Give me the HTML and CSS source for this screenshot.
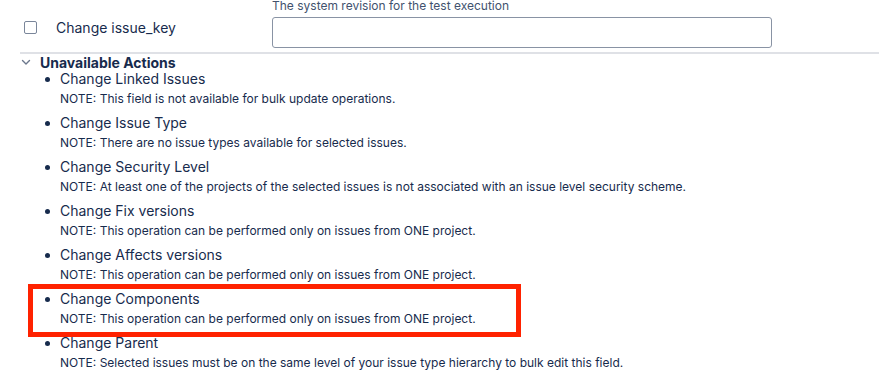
FILE: index.html
```html
<!DOCTYPE html>
<html lang="en">
<head>
    <meta charset="UTF-8">
    <title>Bulk Edit - Unavailable Actions</title>
    <link rel="stylesheet" href="styles.css">
</head>
<body>
    <div class="page">
        <div class="field-row">
            <label class="check">
                <span class="box"></span>
                <span class="field-name">Change issue_key</span>
            </label>
            <div class="field-input">
                <div class="help">The system revision for the test execution</div>
                <input type="text" class="text-input">
            </div>
        </div>

        <div class="section">
            <div class="section-title">
                <svg class="chevron" width="10" height="10" viewBox="0 0 10 10">
                    <path d="M1.5 3.5 L5 7 L8.5 3.5" fill="none" stroke="#6b778c" stroke-width="1.4" stroke-linecap="round" stroke-linejoin="round"/>
                </svg>
                Unavailable Actions
            </div>
            <ul class="actions">
                <li>
                    <div class="action">Change Linked Issues</div>
                    <div class="note">NOTE: This field is not available for bulk update operations.</div>
                </li>
                <li>
                    <div class="action">Change Issue Type</div>
                    <div class="note">NOTE: There are no issue types available for selected issues.</div>
                </li>
                <li>
                    <div class="action">Change Security Level</div>
                    <div class="note">NOTE: At least one of the projects of the selected issues is not associated with an issue level security scheme.</div>
                </li>
                <li>
                    <div class="action">Change Fix versions</div>
                    <div class="note">NOTE: This operation can be performed only on issues from ONE project.</div>
                </li>
                <li>
                    <div class="action">Change Affects versions</div>
                    <div class="note">NOTE: This operation can be performed only on issues from ONE project.</div>
                </li>
                <li class="highlight">
                    <div class="action">Change Components</div>
                    <div class="note">NOTE: This operation can be performed only on issues from ONE project.</div>
                </li>
                <li>
                    <div class="action">Change Parent</div>
                    <div class="note">NOTE: Selected issues must be on the same level of your issue type hierarchy to bulk edit this field.</div>
                </li>
            </ul>
        </div>
    </div>
</body>
</html>
```

FILE: styles.css
```css
*, *::before, *::after {
    margin: 0;
    padding: 0;
    box-sizing: border-box;
}

body {
    font-family: Inter, "Noto Sans", sans-serif;
    color: #172b4d;
    background: #fff;
    overflow: hidden;
}

.page {
    padding-left: 20px;
}

.field-row {
    display: flex;
    align-items: flex-start;
    border-bottom: 2px solid #dfe1e6;
    padding-bottom: 4px;
}

.check {
    display: flex;
    align-items: center;
    width: 252px;
    height: 30px;
    margin-top: 12px;
    padding-left: 4px;
}

.box {
    width: 13px;
    height: 13px;
    border: 1px solid #7a869a;
    border-radius: 2px;
    margin-right: 19px;
}

.field-name {
    font-size: 14px;
}

.help {
    font-size: 12px;
    line-height: 12px;
    height: 17px;
    color: #42526e;
}

.text-input {
    display: block;
    width: 500px;
    height: 31px;
    border: 1px solid #8993a4;
    border-radius: 3px;
    background: #fff;
}

.section-title {
    display: flex;
    align-items: center;
    font-size: 14px;
    font-weight: 700;
    height: 16px;
}

.chevron {
    margin-left: 1px;
    margin-right: 9px;
}

.actions {
    list-style: none;
    padding-left: 40px;
}

.actions li {
    position: relative;
    height: 44px;
}

.actions li::before {
    content: "";
    position: absolute;
    left: -15px;
    top: 7px;
    width: 5px;
    height: 5px;
    border-radius: 50%;
    background: #172b4d;
}

.action {
    font-size: 14px;
    line-height: 18px;
}

.note {
    font-size: 12px;
    line-height: 19px;
    margin-top: 1px;
}

.highlight::after {
    content: "";
    position: absolute;
    left: -32px;
    top: -6px;
    width: 493px;
    height: 53px;
    border: 5px solid #ff2200;
}
```
